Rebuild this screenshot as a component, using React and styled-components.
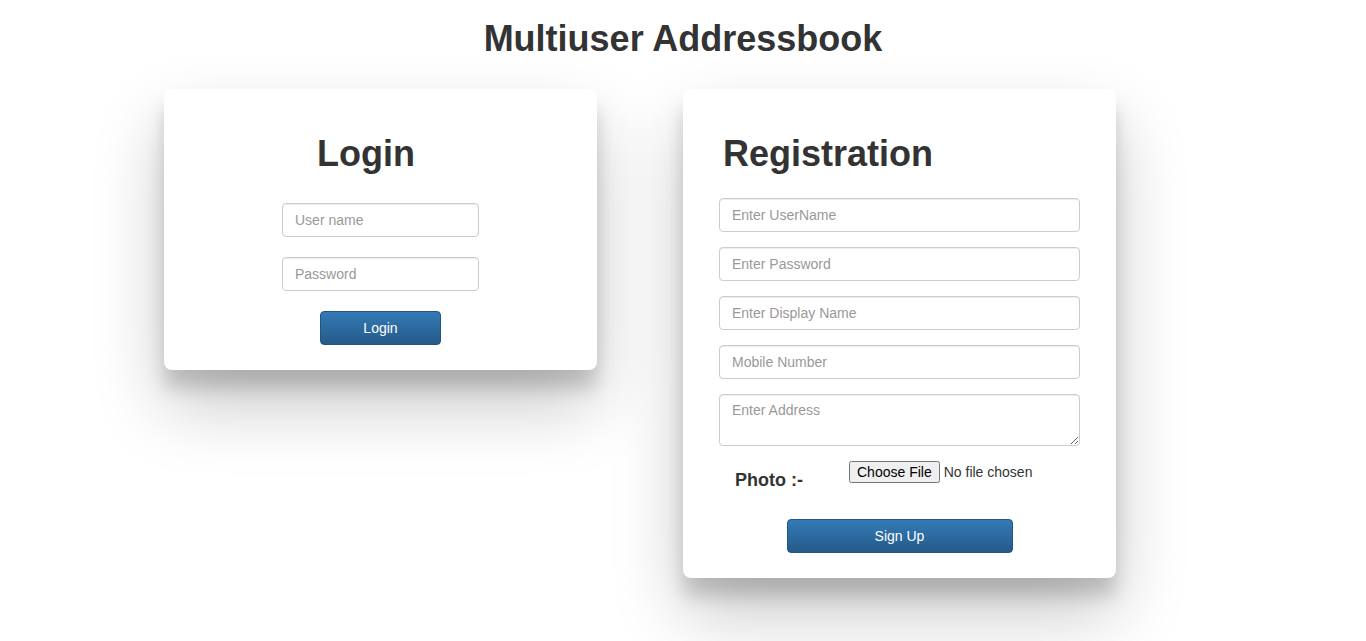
import React from "react";
import styled, { createGlobalStyle } from "styled-components";

const GlobalStyle = createGlobalStyle`
  * {
    box-sizing: border-box;
  }
  body {
    margin: 0;
    background: #fff;
    color: #333;
    font-family: "Liberation Sans", Arial, Helvetica, sans-serif;
    font-size: 14px;
    line-height: 1.42857;
  }
`;

const Page = styled.div`
  min-height: 641px;
  padding-bottom: 40px;
`;

const Title = styled.h1`
  margin: 19px 0 0;
  font-size: 36px;
  line-height: 1.1;
  font-weight: 700;
  text-align: center;
  color: #333;
`;

const Row = styled.div`
  display: flex;
  align-items: flex-start;
  gap: 86px;
  margin-top: 30px;
  padding-left: 164px;
`;

const Card = styled.div`
  width: 433px;
  background: #fff;
  border-radius: 8px;
  padding: 45px 36px 25px;
  box-shadow: 0 35px 70px rgba(0, 0, 0, 0.22), 0 18px 18px rgba(0, 0, 0, 0.16);
  display: flex;
  flex-direction: column;
  align-items: ${({ centered }) => (centered ? "center" : "stretch")};
`;

const Heading = styled.h2`
  margin: 0 0 ${({ gap }) => gap}px;
  font-size: 36px;
  line-height: 1.1;
  font-weight: 700;
  color: #333;
  padding-left: ${({ shiftLeft }) => shiftLeft || 0}px;
  padding-right: ${({ shiftRight }) => shiftRight || 0}px;
`;

const Field = styled.input`
  display: block;
  width: ${({ narrow }) => (narrow ? "197px" : "100%")};
  height: 34px;
  padding: 6px 12px;
  margin-bottom: ${({ gap }) => gap}px;
  font: inherit;
  font-size: 14px;
  color: #555;
  background: #fff;
  border: 1px solid #ccc;
  border-radius: 4px;
  box-shadow: inset 0 1px 1px rgba(0, 0, 0, 0.075);

  &::placeholder {
    color: #999;
  }
`;

const Area = styled.textarea`
  display: block;
  width: 100%;
  height: 52px;
  padding: 6px 12px;
  font: inherit;
  font-size: 14px;
  color: #555;
  border: 1px solid #ccc;
  border-radius: 4px;
  resize: vertical;
  box-shadow: inset 0 1px 1px rgba(0, 0, 0, 0.075);

  &::placeholder {
    color: #999;
  }
`;

const Button = styled.button`
  display: block;
  width: ${({ w }) => w}px;
  height: 34px;
  margin: ${({ center }) => (center ? "0 auto" : "0")};
  font-family: inherit;
  font-size: 14px;
  color: #fff;
  background-image: linear-gradient(to bottom, #337ab7 0, #265a88 100%);
  border: 1px solid #245580;
  border-radius: 4px;
  cursor: pointer;
`;

const PhotoRow = styled.div`
  display: flex;
  align-items: flex-start;
  margin-top: 15px;
  height: 58px;
`;

const PhotoLabel = styled.label`
  flex: 0 0 130px;
  padding-left: 16px;
  margin-top: 7px;
  font-size: 18px;
  font-weight: 700;
  color: #333;
`;

const FileInput = styled.input`
  font-family: "Liberation Sans", Arial, sans-serif;
  font-size: 14px;
  color: #333;
`;

export default function App() {
  return (
    <Page>
      <GlobalStyle />
      <Title>Multiuser Addressbook</Title>
      <Row>
        <Card centered>
          <Heading gap={30} shiftRight={29}>
            Login
          </Heading>
          <Field narrow gap={20} placeholder="User name" />
          <Field narrow gap={20} type="password" placeholder="Password" />
          <Button w={121}>Login</Button>
        </Card>
        <Card>
          <Heading gap={25} shiftLeft={4}>
            Registration
          </Heading>
          <Field gap={15} placeholder="Enter UserName" />
          <Field gap={15} type="password" placeholder="Enter Password" />
          <Field gap={15} placeholder="Enter Display Name" />
          <Field gap={15} placeholder="Mobile Number" />
          <Area placeholder="Enter Address" />
          <PhotoRow>
            <PhotoLabel>Photo :-</PhotoLabel>
            <FileInput type="file" />
          </PhotoRow>
          <Button w={226} center>
            Sign Up
          </Button>
        </Card>
      </Row>
    </Page>
  );
}
